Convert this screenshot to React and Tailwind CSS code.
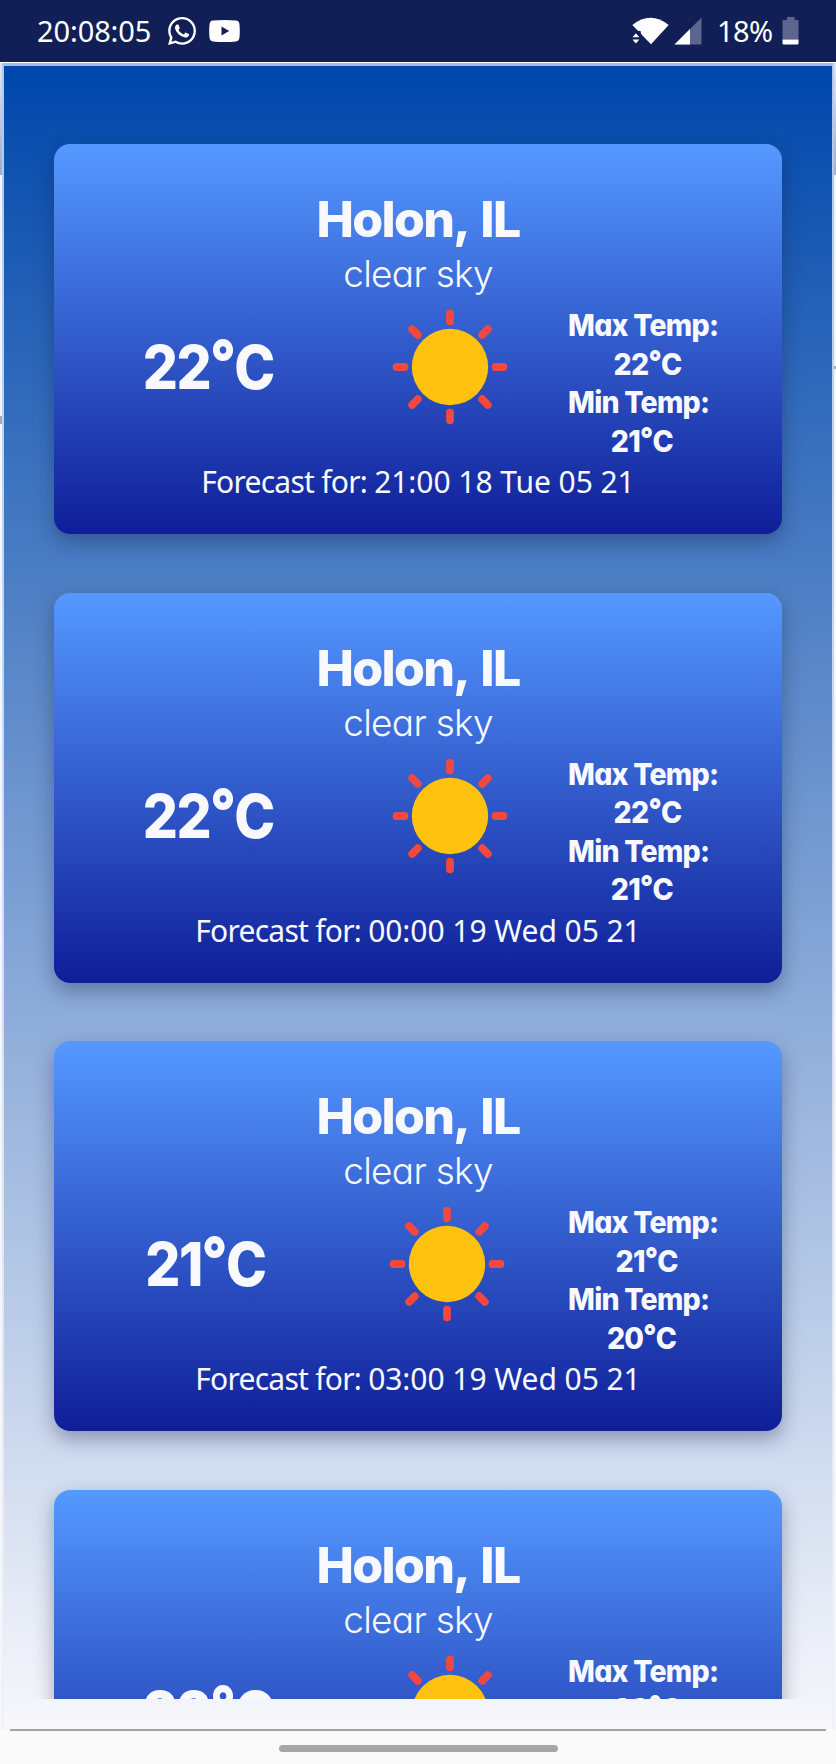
import React from 'react';

const FORECASTS = [
  { temp: '22', max: '22', min: '21', when: '21:00 18 Tue 05 21' },
  { temp: '22', max: '22', min: '21', when: '00:00 19 Wed 05 21' },
  { temp: '21', max: '21', min: '20', when: '03:00 19 Wed 05 21' },
  { temp: '22', max: '22', min: '20', when: '06:00 19 Wed 05 21' },
];

function Sun() {
  return (
    <svg width="116" height="116" viewBox="-58 -58 116 116" className="shrink-0">
      <circle r="38.2" fill="#ffc20e" />
      {[0, 45, 90, 135, 180, 225, 270, 315].map((a) => (
        <rect key={a} x="-3.9" y="-57.3" width="7.8" height="15.6" rx="3.7" fill="#f1483f" transform={`rotate(${a})`} />
      ))}
    </svg>
  );
}

function Degrees({ value }) {
  return (
    <>
      {value}
      <span className="relative -top-[0.1em] font-black">°</span>
      C
    </>
  );
}

function Card({ f }) {
  const narrow = f.temp === '21';
  return (
    <article className="flex h-[390px] w-[728px] shrink-0 flex-col items-center rounded-[16px] bg-linear-to-b/srgb from-[#5599ff] to-[#0f1e98] pt-[48px] text-[#f8f8ff] shadow-[0_8px_20px_rgba(20,30,60,0.36)]">
      <h2 className="h-[54px] text-[50px] leading-[54px] font-extrabold tracking-[-1.7px] [word-spacing:4px] whitespace-nowrap">Holon, IL</h2>
      <p className="h-[56px] text-[37px] leading-[56px] font-light tracking-[-0.7px] whitespace-nowrap">clear sky</p>
      <div className="flex h-[158px] w-full items-start">
        <div className={`flex h-[130px] items-center justify-center ${narrow ? 'w-[303px]' : 'w-[309px]'}`}>
          <span className="scale-x-92 text-[60px] leading-none font-extrabold tracking-[-1.6px] whitespace-nowrap"><Degrees value={f.temp} /></span>
        </div>
        <div className={`pt-[7px] ${narrow ? 'ml-[32px]' : 'ml-[29px]'}`}>
          <Sun />
        </div>
        <div className={`w-[160px] origin-left scale-x-95 pt-[4px] text-[30px] leading-[38.6px] font-extrabold tracking-[-0.8px] whitespace-nowrap ${narrow ? 'ml-[63px]' : 'ml-[60px]'}`}>
          <div className="h-[38.6px]">Max Temp:</div>
          <div className={`h-[38.6px] ${narrow ? 'pl-[50px]' : 'pl-[48px]'}`}><Degrees value={f.max} /></div>
          <div className="h-[38.6px]">Min Temp:</div>
          <div className={`h-[38.6px] ${narrow ? 'pl-[41px]' : 'pl-[45px]'}`}><Degrees value={f.min} /></div>
        </div>
      </div>
      <p className="h-[44px] font-['Noto_Sans'] text-[30px] leading-[44px] whitespace-nowrap">
        <span className="tracking-[-0.75px]">Forecast for: </span>
        <span className="tracking-[-0.05px]">{f.when}</span>
      </p>
    </article>
  );
}

function StatusBar() {
  return (
    <header className="flex h-[62px] shrink-0 items-center bg-[#121f57] pl-[37px] font-['Noto_Sans'] text-[29px] text-white">
      <span className="w-[131px] tracking-[-0.1px] whitespace-nowrap">20:08:05</span>
      <svg width="28" height="28" viewBox="0 0 24 24" fill="white">
        <path d="M17.472 14.382c-.297-.149-1.758-.867-2.03-.967-.273-.099-.471-.148-.67.15-.197.297-.767.966-.94 1.164-.173.199-.347.223-.644.075-.297-.15-1.255-.463-2.39-1.475-.883-.788-1.48-1.761-1.653-2.059-.173-.297-.018-.458.13-.606.134-.133.298-.347.446-.52.149-.174.198-.298.298-.497.099-.198.05-.371-.025-.52-.075-.149-.669-1.612-.916-2.207-.242-.579-.487-.5-.669-.51-.173-.008-.371-.01-.57-.01-.198 0-.52.074-.792.372-.272.297-1.04 1.016-1.04 2.479 0 1.462 1.065 2.875 1.213 3.074.149.198 2.096 3.2 5.077 4.487.709.306 1.262.489 1.694.625.712.227 1.36.195 1.871.118.571-.085 1.758-.719 2.006-1.413.248-.694.248-1.289.173-1.413-.074-.124-.272-.198-.57-.347zM12.05 0C5.495 0 .16 5.335.157 11.892c0 2.096.547 4.142 1.588 5.945L.057 24l6.305-1.654a11.882 11.882 0 005.683 1.448h.005c6.554 0 11.89-5.335 11.893-11.893A11.821 11.821 0 0012.05 0zm0 21.785a9.87 9.87 0 01-5.031-1.378l-.361-.214-3.741.982.998-3.648-.235-.374a9.86 9.86 0 01-1.51-5.26c.001-5.45 4.436-9.884 9.888-9.884a9.83 9.83 0 019.884 9.893c-.003 5.45-4.437 9.883-9.892 9.883z" />
      </svg>
      <svg width="31" height="22" viewBox="0 0 31 22" className="ml-[13px]">
        <path fill="white" fillRule="evenodd" d="M4 .6Q15.500-.6 27 .6Q30 .9 30.400 4Q31.200 11 30.400 18Q30 21.100 27 21.400Q15.500 22.600 4 21.400Q1 21.100.6 18Q-.2 11 .6 4Q1 .9 4 .6ZM12.500 6.500V15.500L20.200 11Z" />
      </svg>
      <div className="flex-1" />
      <svg width="37" height="28" viewBox="0 0 37 28" fill="white">
        <path d="M.3 8Q18.500-6.500 36.700 8L19 27.200Z" />
        <path d="M-1 19.300L-1 14.500L4 13.700L8.500 14L9.500 19.300L8 28H-1Z" fill="#121f57" />
        <path d="M.5 20.200L3.900 16.200L7.300 20.200ZM.5 22.600H7.300L3.900 26.600Z" />
      </svg>
      <svg width="28" height="28" viewBox="0 0 28 28" className="ml-[5px]">
        <path d="M27.500.5V27.500H.5Z" fill="#5b658e" />
        <path d="M16 12V27.500H.5Z" fill="white" />
      </svg>
      <span className="ml-[15px] w-[65px] tracking-[-0.6px] whitespace-nowrap">18%</span>
      <svg width="17" height="28" viewBox="0 0 17 28" className="mr-[37px]">
        <path d="M5 0H12.500V3H16.500V22.500H.5V3H5Z" fill="#5b658e" />
        <path d="M.5 22.500H16.500V26.500Q16.500 27.500 15.500 27.500H1.500Q.5 27.500.5 26.500Z" fill="white" />
      </svg>
    </header>
  );
}

export default function App() {
  return (
    <div className="flex h-[1764px] w-[836px] flex-col overflow-hidden bg-[#fafafa] font-['Inter',sans-serif] [font-feature-settings:'cv11','calt'_0]">
      <StatusBar />
      <div className="flex h-[1668px] shrink-0 border-t border-white bg-[#f3f4fa]">
        <div className="flex w-[2px] shrink-0 flex-col">
          <div className="h-[112px] bg-linear-to-b from-[#dce7f6] to-[#9eacd0]" />
          <div className="h-[241px] bg-[#eef4fd]" />
          <div className="h-[8px] bg-[#a5aabb]" />
          <div className="flex-1 bg-[#f3f6fa]" />
        </div>
        <div className="w-[2px] shrink-0 bg-linear-to-b from-[#b4c8ea] to-[#f1f1f6]" />
        <main className="flex w-[828px] flex-col border-t-[3px] border-[#a4bce6] bg-linear-to-b/srgb from-[#0047ab] to-[#f8f8fc]">
          <div className="flex h-[1633px] flex-col items-center gap-[58.6px] overflow-hidden pt-[78px]">
            {FORECASTS.map((f) => <Card key={f.when} f={f} />)}
          </div>
        </main>
        <div className="w-[2px] shrink-0 bg-linear-to-b from-[#b4c8ea] to-[#f1f1f6]" />
        <div className="flex w-[2px] shrink-0 flex-col">
          <div className="h-[112px] bg-linear-to-b from-[#dce7f6] to-[#9eacd0]" />
          <div className="h-[191px] bg-[#eef4fd]" />
          <div className="h-[3px] bg-[#a5aabb]" />
          <div className="flex-1 bg-[#f3f6fa]" />
        </div>
      </div>
      <div className="mx-[10px] -mt-px h-[2px] shrink-0 bg-[#a6a3a1]" />
      <div className="mx-auto mt-[14px] h-[7px] w-[279px] shrink-0 rounded-full bg-[#a7a7a7]" />
    </div>
  );
}
